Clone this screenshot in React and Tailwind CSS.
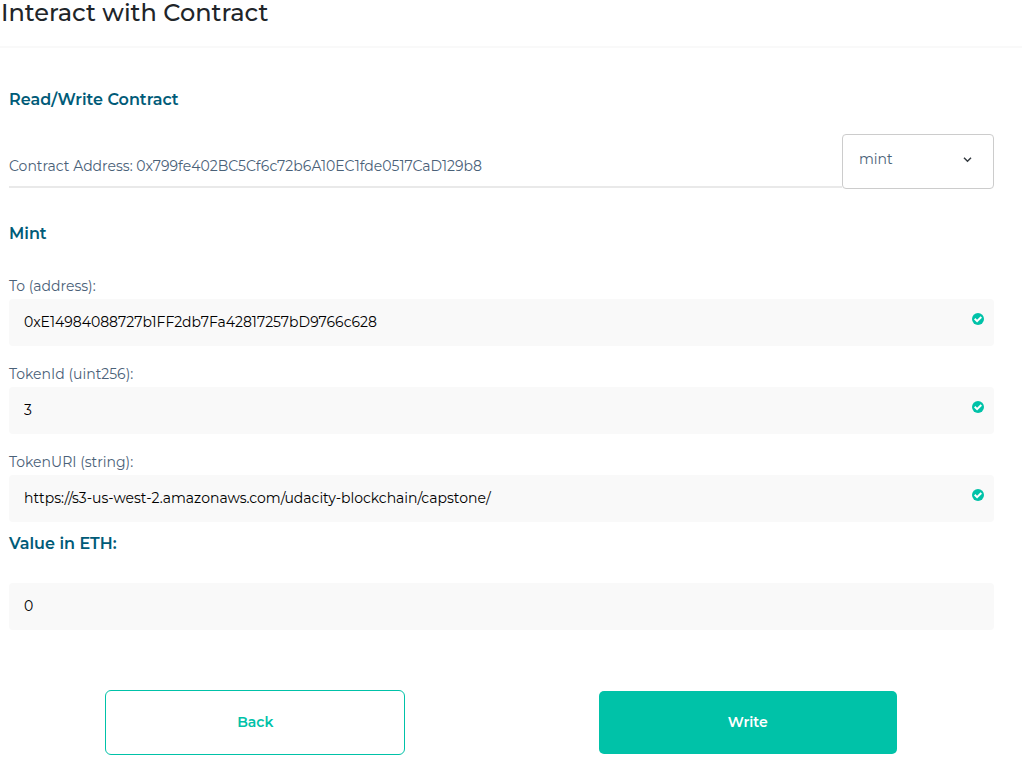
import React, { useState } from "react";

const fields = [
  { id: "to", label: "To (address):", value: "0xE14984088727b1FF2db7Fa42817257bD9766c628" },
  { id: "token-id", label: "TokenId (uint256):", value: "3" },
  {
    id: "token-uri",
    label: "TokenURI (string):",
    value: "https://s3-us-west-2.amazonaws.com/udacity-blockchain/capstone/",
  },
];

const inputStyle =
  "block h-[47px] w-full rounded bg-[#f9f9f9] pr-10 pb-0.5 pl-[15px] text-sm text-black outline-none focus:ring-1 focus:ring-[#00c2a8]";
const headingStyle = "text-base leading-6 font-semibold text-[#005b78]";

function ValidIcon() {
  return (
    <svg viewBox="0 0 12 12" className="pointer-events-none absolute top-3.5 right-2.5 size-3" aria-hidden="true">
      <circle cx="6" cy="6" r="6" fill="#00c2a8" />
      <path d="M2.7 5.8 5.1 8.1 9.3 4" fill="none" stroke="#fff" strokeWidth="2" />
    </svg>
  );
}

function Field({ id, label, value }) {
  const [text, setText] = useState(value);
  return (
    <div className="flex flex-col gap-[3px]">
      <label htmlFor={id} className="text-sm leading-5 text-[#4a6178]">
        {label}
      </label>
      <div className="relative">
        <input id={id} type="text" value={text} onChange={(e) => setText(e.target.value)} className={inputStyle} />
        <ValidIcon />
      </div>
    </div>
  );
}

export default function App() {
  const [eth, setEth] = useState("0");
  return (
    <main className="bg-white font-['Montserrat','Inter',sans-serif]">
      <header className="border-b-2 border-[#f9f9f9] pb-5 pl-px">
        <h1 className="text-2xl leading-[26px] font-medium text-[#212529]">Interact with Contract</h1>
      </header>

      <form className="pt-10 pr-7 pb-4 pl-[9px]" onSubmit={(e) => e.preventDefault()}>
        <h2 className={headingStyle}>Read/Write Contract</h2>

        <div className="mt-[22px] flex items-start">
          <p className="h-[54px] min-w-0 grow border-b-2 border-[#e9e9e9] pt-[22px] text-sm leading-5 text-[#4a6178]">
            Contract Address: 0x799fe402BC5Cf6c72b6A10EC1fde0517CaD129b8
          </p>
          <div className="relative w-[152px] shrink-0">
            <select
              aria-label="Contract function"
              defaultValue="mint"
              className="block h-[55px] w-full appearance-none rounded border border-[#cccccc] bg-white pb-1.5 pl-4 text-sm text-[#4a6178]"
            >
              <option value="mint">mint</option>
            </select>
            <svg
              viewBox="0 0 10 10"
              className="pointer-events-none absolute top-5 right-[21px] size-2.5"
              fill="none"
              stroke="#343a40"
              strokeWidth="1.5"
              aria-hidden="true"
            >
              <path d="M1 3.8 4.5 7.2 8 3.8" />
            </svg>
          </div>
        </div>

        <h2 className={`mt-[33px] ${headingStyle}`}>Mint</h2>

        <div className="mt-[30px] flex flex-col gap-[18px]">
          {fields.map((field) => (
            <Field key={field.id} {...field} />
          ))}
        </div>

        <label htmlFor="eth" className={`mt-2.5 block ${headingStyle}`}>
          Value in ETH:
        </label>
        <input
          id="eth"
          type="text"
          value={eth}
          onChange={(e) => setEth(e.target.value)}
          className={`mt-[27px] ${inputStyle}`}
        />

        <div className="mt-[60px] grid grid-cols-2 justify-items-center">
          <button
            type="button"
            className="h-[65px] w-[300px] max-w-full rounded-md border border-[#00c2a8] bg-white pb-0.5 text-sm font-semibold text-[#00c2a8]"
          >
            Back
          </button>
          <button
            type="submit"
            className="h-[65px] w-[300px] max-w-full rounded-md border border-transparent bg-[#00c2a8] bg-clip-padding pb-0.5 text-sm font-semibold text-white"
          >
            Write
          </button>
        </div>
      </form>
    </main>
  );
}
